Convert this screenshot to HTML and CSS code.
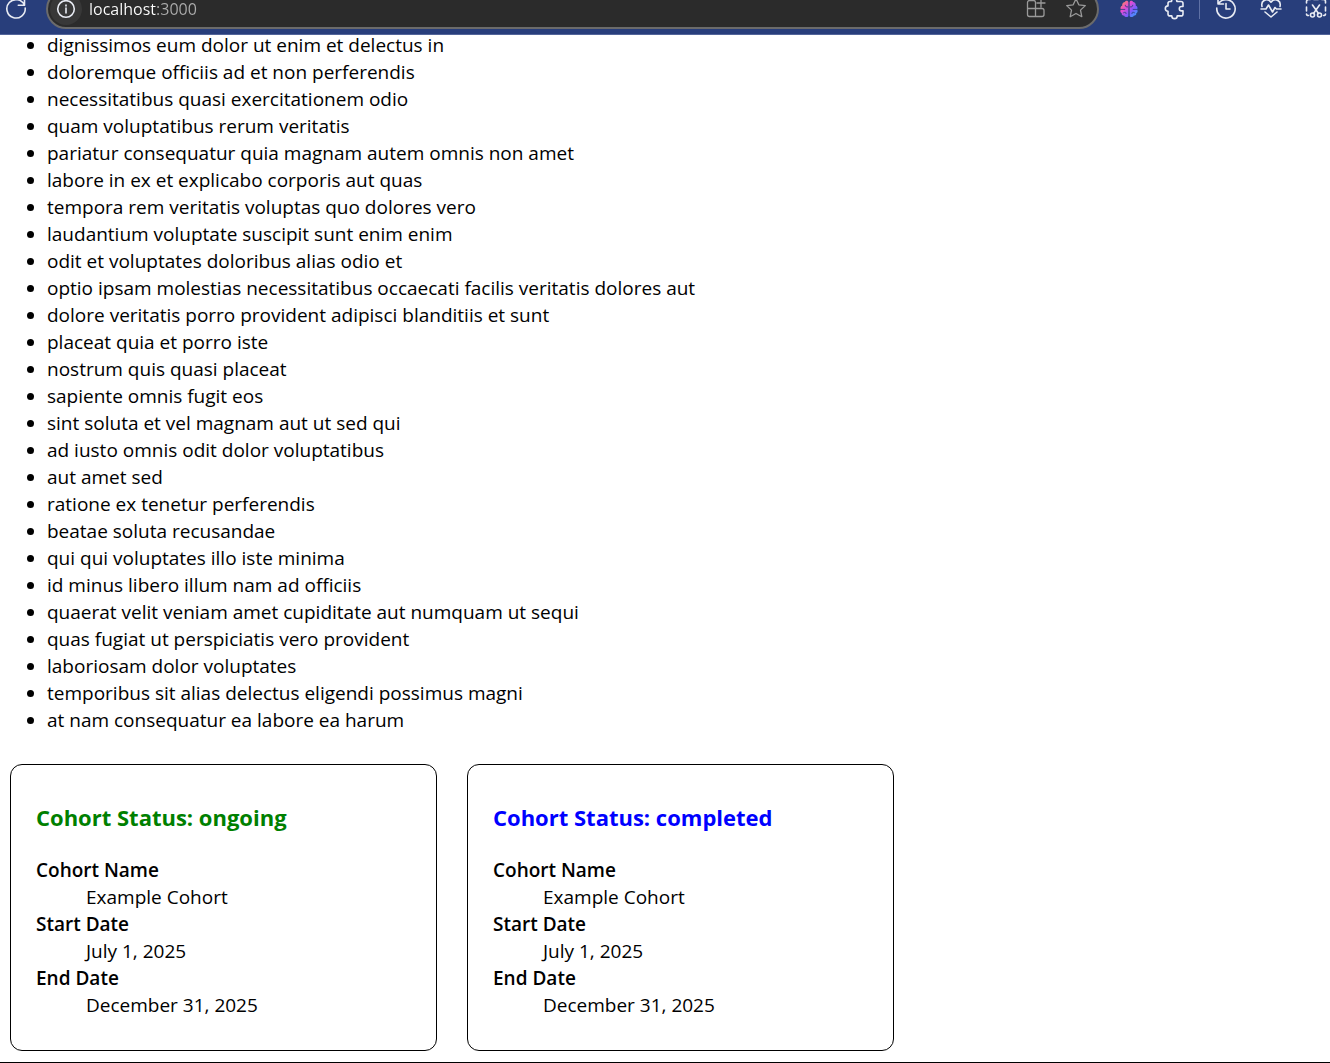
FILE: index.html
```
<!DOCTYPE html>
<html lang="en">
<head>
<meta charset="utf-8">
<meta name="viewport" content="width=device-width, initial-scale=1">
<title>localhost:3000</title>
<link rel="stylesheet" href="styles.css">
</head>
<body>
<header class="browser">
  <div class="toolbar">
    <button class="tool" type="button" aria-label="Reload">
      <svg viewBox="0 0 24 24"><path d="M20.500 8.200A9.200 9.200 0 1 0 21.200 11M20.500 2v6.200h-6.200"/></svg>
    </button>
    <div class="address">
      <button class="site-info" type="button" aria-label="Site information">
        <svg viewBox="0 0 24 24"><circle cx="12" cy="12" r="8.300"/><path d="M12 11v5M12 8v1"/></svg>
      </button>
      <input class="url" type="text" aria-label="Address" value="localhost:3000">
      <button class="tool muted" type="button" aria-label="Add app">
        <svg viewBox="0 0 24 24"><path d="M11.500 11.500V5.500a2 2 0 0 0-2-2h-4a2 2 0 0 0-2 2v12a2 2 0 0 0 2 2h12.500a2 2 0 0 0 2-2v-4a2 2 0 0 0-2-2H3.500M11.500 11.500v8M17 2v8M13 6h8"/></svg>
      </button>
      <button class="tool muted" type="button" aria-label="Add to favorites">
        <svg viewBox="0 0 24 24"><path d="M12 1.800l2.800 6 6.500.8-4.800 4.500 1.300 6.600L12 16.500l-5.800 3.200 1.300-6.600-4.800-4.500 6.500-.8z"/></svg>
      </button>
    </div>
    <nav class="extensions" aria-label="Extensions">
      <button class="tool" type="button" aria-label="Brain extension">
        <svg class="brain" viewBox="0 0 24 24">
          <defs><linearGradient id="brain" x1="0" y1="0" x2="1" y2="1"><stop offset="0" stop-color="#ff9a3d"/><stop offset=".35" stop-color="#e64bd0"/><stop offset=".65" stop-color="#7c5cff"/><stop offset="1" stop-color="#25b5ff"/></linearGradient></defs>
          <path fill="url(#brain)" stroke="none" d="M11.300 4v16c0 2-4 2.500-5 0-2 0-3.500-1.500-3-3-2-1-2-3-1-4.500-1-1.500-.5-4 1.500-4.500C3.500 5 5.500 3.500 7 3.500c.8-2 4.300-2 4.300.5zM12.700 4v16c0 2 4 2.500 5 0 2 0 3.500-1.500 3-3 2-1 2-3 1-4.500 1-1.500.5-4-1.500-4.500.3-3-1.700-4.500-3.200-4.500-.8-2-4.300-2-4.300.5z"/>
          <path class="folds" d="M2.500 12.500h4.500M7.500 7.500c0 2 1 2 3 2M5.500 16.500c2-1 3-1 3 1M21.500 12.500H17M16.500 7.500c0 2-1 2-3 2M18.500 16.500c-2-1-3-1-3 1"/>
        </svg>
      </button>
      <button class="tool" type="button" aria-label="Extensions">
        <svg viewBox="0 0 24 24"><path d="M9.500 4.500a2.700 2.700 0 0 1 5.400 0H19a2 2 0 0 1 2 2v3h-1.500a2.200 2.200 0 0 0 0 4.400H21v3a2 2 0 0 1-2 2h-3.800a2.700 2.700 0 0 1-5.400 0H8a2 2 0 0 1-2-2v-2.600a2.700 2.700 0 0 1 0-5.400V6.500a2 2 0 0 1 2-2z"/></svg>
      </button>
      <span class="separator"></span>
      <button class="tool" type="button" aria-label="History">
        <svg viewBox="0 0 24 24"><path d="M4.500 6.500A9.200 9.200 0 1 1 2.800 11M4 1.500v5.500h5.500M12 6.500V12h4"/></svg>
      </button>
      <button class="tool" type="button" aria-label="Browser essentials">
        <svg viewBox="0 0 24 24"><path d="M3 9.500C1.500 3 8.500.5 12 5.200 15.500.5 22.500 3 21 9.500M2 12h5l2.500-4 4 7 2.500-4.500 1.500 1.500H22M6 15l6 5 6-5"/></svg>
      </button>
      <button class="tool" type="button" aria-label="Screenshot">
        <svg viewBox="0 0 24 24"><path d="M2.500 6V4.500a2 2 0 0 1 2-2H6M10 2.500h4M18 2.500h1.500a2 2 0 0 1 2 2V6M2.500 10v4M21.500 10v4M2.500 17c0 1 .7 1.500 2 1.500M21.500 17c0 1-.7 1.500-2 1.500M8.500 8l6 8.500M15.500 8l-6 8.500"/><circle cx="8.500" cy="18" r="2"/><circle cx="15.500" cy="18" r="2"/></svg>
      </button>
    </nav>
  </div>
</header>
<main class="page">
  <ul class="titles">
    <li>dignissimos eum dolor ut enim et delectus in</li>
    <li>doloremque officiis ad et non perferendis</li>
    <li>necessitatibus quasi exercitationem odio</li>
    <li>quam voluptatibus rerum veritatis</li>
    <li>pariatur consequatur quia magnam autem omnis non amet</li>
    <li>labore in ex et explicabo corporis aut quas</li>
    <li>tempora rem veritatis voluptas quo dolores vero</li>
    <li>laudantium voluptate suscipit sunt enim enim</li>
    <li>odit et voluptates doloribus alias odio et</li>
    <li>optio ipsam molestias necessitatibus occaecati facilis veritatis dolores aut</li>
    <li>dolore veritatis porro provident adipisci blanditiis et sunt</li>
    <li>placeat quia et porro iste</li>
    <li>nostrum quis quasi placeat</li>
    <li>sapiente omnis fugit eos</li>
    <li>sint soluta et vel magnam aut ut sed qui</li>
    <li>ad iusto omnis odit dolor voluptatibus</li>
    <li>aut amet sed</li>
    <li>ratione ex tenetur perferendis</li>
    <li>beatae soluta recusandae</li>
    <li>qui qui voluptates illo iste minima</li>
    <li>id minus libero illum nam ad officiis</li>
    <li>quaerat velit veniam amet cupiditate aut numquam ut sequi</li>
    <li>quas fugiat ut perspiciatis vero provident</li>
    <li>laboriosam dolor voluptates</li>
    <li>temporibus sit alias delectus eligendi possimus magni</li>
    <li>at nam consequatur ea labore ea harum</li>
  </ul>
  <div class="cohorts">
    <section class="card">
      <h3 class="status ongoing">Cohort Status: ongoing</h3>
      <dl class="details">
        <dt>Cohort Name</dt><dd>Example Cohort</dd>
        <dt>Start Date</dt><dd>July 1, 2025</dd>
        <dt>End Date</dt><dd>December 31, 2025</dd>
      </dl>
    </section>
    <section class="card">
      <h3 class="status completed">Cohort Status: completed</h3>
      <dl class="details">
        <dt>Cohort Name</dt><dd>Example Cohort</dd>
        <dt>Start Date</dt><dd>July 1, 2025</dd>
        <dt>End Date</dt><dd>December 31, 2025</dd>
      </dl>
    </section>
  </div>
</main>
</body>
</html>
```
FILE: styles.css
```
* { box-sizing: border-box; }

body {
  margin: 0;
  background: #fff;
  color: #000;
  font-family: "Open Sans", "Noto Sans", sans-serif;
  font-size: 19px;
  line-height: 27px;
}

.browser {
  display: flex;
  align-items: flex-end;
  height: 35px;
  padding: 0 2px 5px 4px;
  overflow: hidden;
  background: #283e7b;
  border-bottom: 1px solid #53659a;
}

.toolbar {
  display: flex;
  flex: 1;
  align-items: center;
  gap: 18px;
}

.tool,
.site-info {
  display: flex;
  flex: none;
  align-items: center;
  justify-content: center;
  width: 24px;
  height: 24px;
  padding: 0;
  border: 0;
  background: none;
  color: #e8ebf3;
}

.site-info {
  width: 32px;
  height: 32px;
  border-radius: 50%;
  background: #383838;
}

.tool svg,
.site-info svg {
  width: 24px;
  height: 24px;
  fill: none;
  stroke: currentColor;
  stroke-width: 1.6;
  stroke-linecap: round;
  stroke-linejoin: round;
}

.tool.muted { color: #9a9a9a; }
.tool.muted svg { stroke-width: 1.3; }
.tool .brain { width: 20px; height: 20px; }
.tool .folds { stroke: #283e7b; stroke-width: 1; }

.address {
  display: flex;
  flex: 1;
  align-items: center;
  gap: 16px;
  height: 40px;
  padding: 0 9px 0 2px;
  border: 2px solid #6b6b6b;
  border-radius: 20px;
  background: #2b2b2b;
}

.url {
  flex: 1;
  min-width: 0;
  margin-left: -9px;
  padding: 0;
  border: 0;
  outline: 0;
  background: linear-gradient(to right, #fff 68px, #adadad 68px);
  -webkit-background-clip: text;
  background-clip: text;
  color: transparent;
  font: inherit;
  font-size: 16px;
}

.extensions {
  display: flex;
  align-items: center;
  gap: 21px;
}

.separator {
  width: 1px;
  height: 20px;
  margin: 0 -7px 0 -8px;
  background: #5f71a5;
}

.page {
  padding-bottom: 11px;
  border-bottom: 1px solid #000;
}

.titles {
  margin: -3px 0 30px;
  padding-left: 47px;
}

.cohorts {
  display: flex;
  flex-wrap: wrap;
  gap: 30px;
  padding: 0 10px;
}

.card {
  flex: 0 1 427px;
  padding: 39px 25px 31px;
  border: 1px solid #000;
  border-radius: 12px;
}

.status {
  margin: 0 0 26px;
  font-size: 22px;
  font-weight: 700;
}

.ongoing { color: green; }
.completed { color: blue; }

.details { margin: 0; }
.details dt { font-weight: 600; }
.details dd { margin: 0 0 0 50px; }
```
